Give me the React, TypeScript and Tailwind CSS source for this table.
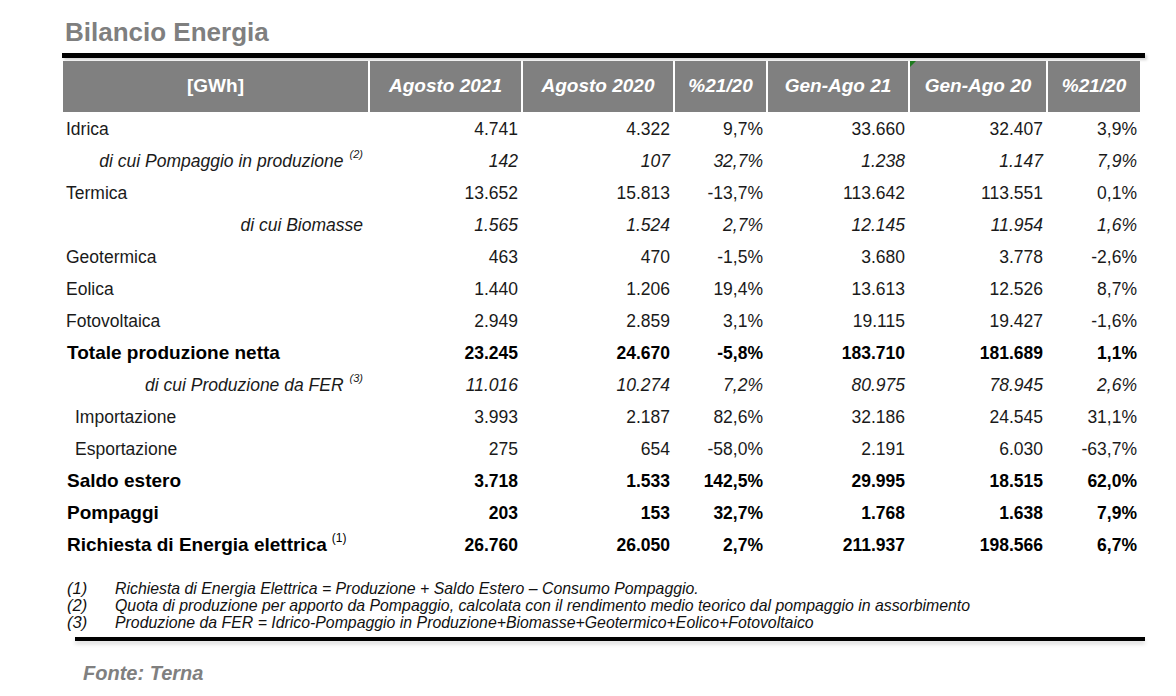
import React from "react";

type Row = {
  label: string;
  sup?: string;
  kind: "normal" | "sub" | "bold" | "indent";
  vals: string[];
};

const rows: Row[] = [
  { label: "Idrica", kind: "normal", vals: ["4.741", "4.322", "9,7%", "33.660", "32.407", "3,9%"] },
  { label: "di cui Pompaggio in produzione", sup: "(2)", kind: "sub", vals: ["142", "107", "32,7%", "1.238", "1.147", "7,9%"] },
  { label: "Termica", kind: "normal", vals: ["13.652", "15.813", "-13,7%", "113.642", "113.551", "0,1%"] },
  { label: "di cui Biomasse", kind: "sub", vals: ["1.565", "1.524", "2,7%", "12.145", "11.954", "1,6%"] },
  { label: "Geotermica", kind: "normal", vals: ["463", "470", "-1,5%", "3.680", "3.778", "-2,6%"] },
  { label: "Eolica", kind: "normal", vals: ["1.440", "1.206", "19,4%", "13.613", "12.526", "8,7%"] },
  { label: "Fotovoltaica", kind: "normal", vals: ["2.949", "2.859", "3,1%", "19.115", "19.427", "-1,6%"] },
  { label: "Totale produzione netta", kind: "bold", vals: ["23.245", "24.670", "-5,8%", "183.710", "181.689", "1,1%"] },
  { label: "di cui Produzione da FER", sup: "(3)", kind: "sub", vals: ["11.016", "10.274", "7,2%", "80.975", "78.945", "2,6%"] },
  { label: "Importazione", kind: "indent", vals: ["3.993", "2.187", "82,6%", "32.186", "24.545", "31,1%"] },
  { label: "Esportazione", kind: "indent", vals: ["275", "654", "-58,0%", "2.191", "6.030", "-63,7%"] },
  { label: "Saldo estero", kind: "bold", vals: ["3.718", "1.533", "142,5%", "29.995", "18.515", "62,0%"] },
  { label: "Pompaggi", kind: "bold", vals: ["203", "153", "32,7%", "1.768", "1.638", "7,9%"] },
  { label: "Richiesta di Energia elettrica", sup: "(1)", kind: "bold", vals: ["26.760", "26.050", "2,7%", "211.937", "198.566", "6,7%"] },
];

const headers = ["Agosto 2021", "Agosto 2020", "%21/20", "Gen-Ago 21", "Gen-Ago 20", "%21/20"];

const gridCols = "grid grid-cols-[305px_151px_150px_91px_140px_136px_92px] gap-x-[2px]";

function Label({ row }: { row: Row }) {
  if (row.kind === "sub") {
    return (
      <div className="flex items-center justify-end pr-[5px] italic text-[17.5px] text-[#1a1a1a]">
        <span>{row.label}</span>
        {row.sup && (
          <span className="ml-[6px] relative -top-[7px] text-[11px] italic">{row.sup}</span>
        )}
      </div>
    );
  }
  if (row.kind === "bold") {
    return (
      <div className="flex items-center pl-[4px] font-bold text-[19px] text-black">
        <span>{row.label}</span>
        {row.sup && (
          <span className="ml-[5px] relative -top-[7px] text-[12px] font-normal">{row.sup}</span>
        )}
      </div>
    );
  }
  if (row.kind === "indent") {
    return <div className="flex items-center pl-[12px] text-[17.5px] text-[#1a1a1a]">{row.label}</div>;
  }
  return <div className="flex items-center pl-[3px] text-[17.5px] text-[#1a1a1a]">{row.label}</div>;
}

export default function App() {
  return (
    <div
      className="w-[1176px] h-[696px] bg-white overflow-hidden"
      style={{ fontFamily: '"Liberation Sans", Arial, sans-serif' }}
    >
      <div className="pt-[17px] pl-[65px] h-[47px] text-[26px] leading-[30px] font-bold text-[#7f7f7f]">
        Bilancio Energia
      </div>

      <div className="ml-[62px] w-[1083px] mt-[6px]">
        <div className="h-[5px] bg-black shadow-[2px_2px_3px_rgba(0,0,0,0.18)]" />
        <div className={`${gridCols} ml-[1px] mt-[3px] h-[51px]`}>
          <div className="bg-[#808080] flex items-center justify-center text-white font-bold text-[19px]">
            [GWh]
          </div>
          {headers.map((h, i) => (
            <div
              key={i}
              className="relative bg-[#808080] flex items-center justify-center text-white font-bold italic text-[19px]"
            >
              {i === 4 && (
                <span className="absolute left-0 top-0 w-0 h-0 border-t-[6px] border-t-[#1d7a1d] border-r-[6px] border-r-transparent" />
              )}
              {h}
            </div>
          ))}
        </div>

        <div className="ml-[1px] mt-[1px]">
          {rows.map((r, ri) => {
            const numCls =
              r.kind === "bold"
                ? "font-bold text-black"
                : r.kind === "sub"
                ? "italic text-[#1a1a1a]"
                : "text-[#1a1a1a]";
            return (
              <div key={ri} className={`${gridCols} h-[32px]`}>
                <Label row={r} />
                {r.vals.map((v, vi) => (
                  <div
                    key={vi}
                    className={`flex items-center justify-end pr-[3px] text-[17.5px] ${numCls}`}
                  >
                    {v}
                  </div>
                ))}
              </div>
            );
          })}
        </div>
      </div>

      <div className="mt-[19px] ml-[67px] text-[16.5px] leading-[17px] italic text-[#111]">
        {[
          ["(1)", "Richiesta di Energia Elettrica = Produzione + Saldo Estero \u2013 Consumo Pompaggio."],
          ["(2)", "Quota di produzione per apporto da Pompaggio, calcolata con il rendimento medio teorico dal pompaggio in assorbimento"],
          ["(3)", "Produzione da FER = Idrico-Pompaggio in Produzione+Biomasse+Geotermico+Eolico+Fotovoltaico"],
        ].map(([n, t]) => (
          <div key={n} className="flex">
            <span className="w-[48px] shrink-0">{n}</span>
            <span className="whitespace-nowrap origin-left scale-x-[0.96]">{t}</span>
          </div>
        ))}
      </div>

      <div className="ml-[75px] w-[1070px] mt-[6px] h-[4px] bg-black shadow-[0_3px_4px_rgba(0,0,0,0.15)]" />

      <div className="mt-[20px] ml-[83px] text-[20px] leading-[24px] font-bold italic text-[#808080]">
        Fonte: Terna
      </div>
    </div>
  );
}
